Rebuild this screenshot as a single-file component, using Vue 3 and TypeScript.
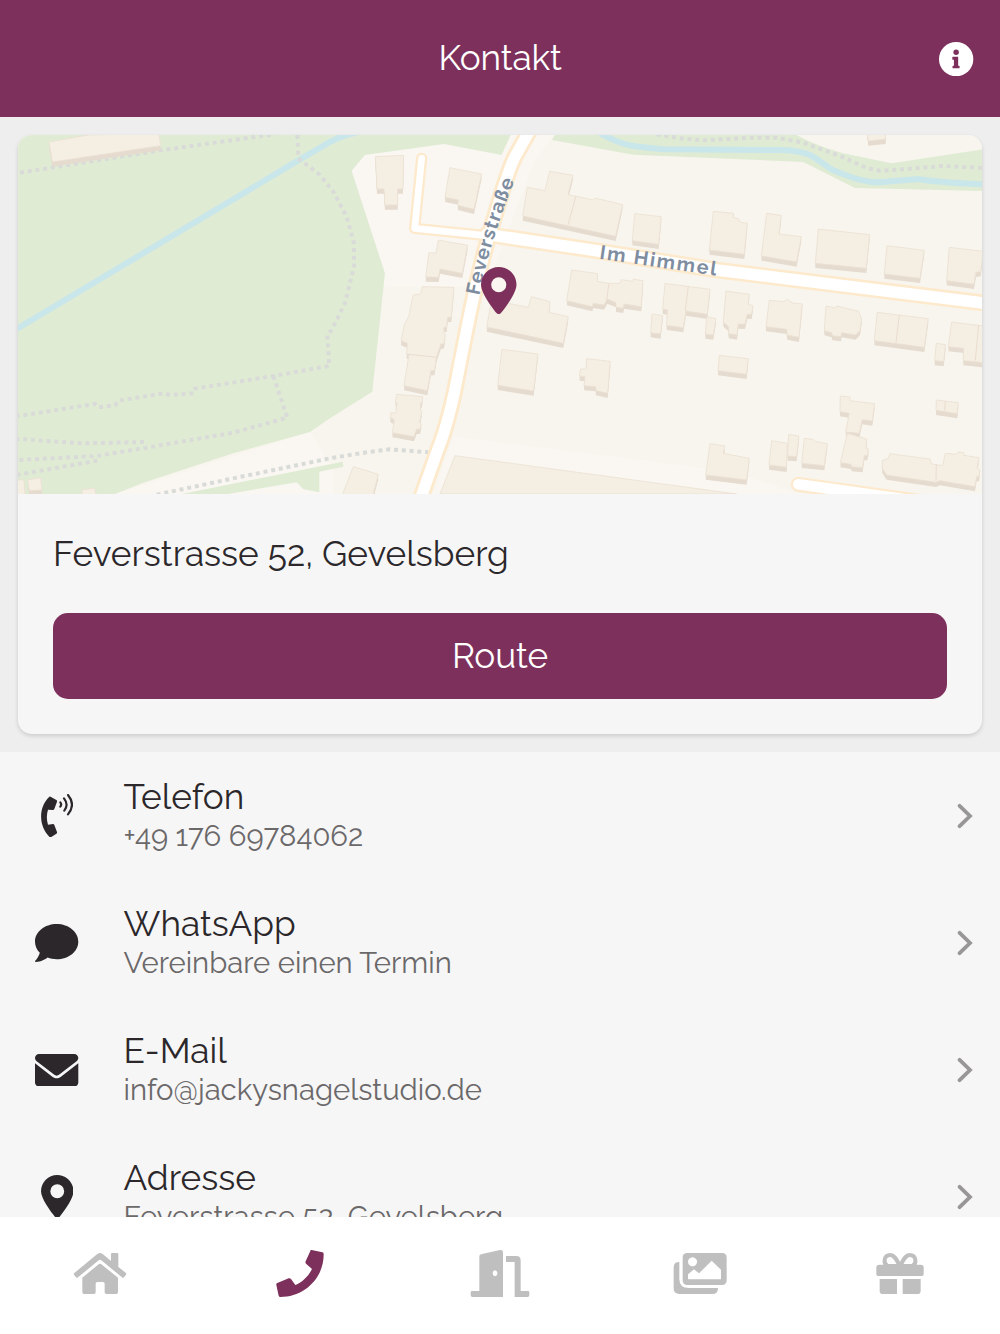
<script setup lang="ts">
import { ref } from 'vue'

interface ContactRow {
  id: string
  title: string
  text: string
}

interface Tile {
  x: number
  shapes: string[]
}

const rows: ContactRow[] = [
  { id: 'phone', title: 'Telefon', text: '+49 176 69784062' },
  { id: 'whatsapp', title: 'WhatsApp', text: 'Vereinbare einen Termin' },
  { id: 'mail', title: 'E-Mail', text: 'info@jackysnagelstudio.de' },
  { id: 'address', title: 'Adresse', text: 'Feverstrasse 52, Gevelsberg' }
]

const tabs = [
  { id: 'home', label: 'Start', viewBox: '210 90 180 141' },
  { id: 'contact', label: 'Kontakt', viewBox: '810 90 180 141' },
  { id: 'studio', label: 'Studio', viewBox: '1410 90 180 141' },
  { id: 'gallery', label: 'Galerie', viewBox: '510 90 180 141' },
  { id: 'gift', label: 'Gutschein', viewBox: '1110 90 180 141' }
]

const activeTab = ref('contact')

// Building outlines, grouped by map tile
const buildings: Tile[] = [
  {
    x: 0,
    shapes: [
      '147,66 265,45 476,40 482,77 157,126',
      '50,1080 72,1080 76,1130 50,1130',
      '83,1080 122,1073 126,1110 88,1112',
      '245,1110 283,1104 290,1130 250,1130'
    ]
  },
  {
    x: 990,
    shapes: [
      '136,110 221,106 219,207 203,207 203,255 165,255 162,207 141,207',
      '360,143 455,162 432,268 383,256 385,240 345,232',
      '325,360 413,376 397,460 330,447 326,472 287,471 297,398 318,399',
      '277,500 372,502 364,592 353,592 350,622 342,622 342,642 346,642 342,672 333,672 320,710 313,752 303,752 292,812 222,797 237,703 230,702 232,670 213,662 223,615 236,590 250,525 272,522',
      '200,823 278,830 276,848 272,850 271,870 276,873 269,908 274,912 270,928 260,928 252,950 187,938 193,900 181,892 183,877 197,880 201,850 196,845',
      '70,1040 145,1063 128,1130 35,1130',
      '592,202 645,212 659,154 729,166 714,224 790,240 795,234 878,254 857,349 578,288',
      '914,281 994,290 986,373 907,362',
      '725,450 803,461 802,484 835,490 870,490 874,479 909,484 910,478 939,482 934,560 882,552 880,565 858,562 858,548 832,537 822,555 790,550 787,560 710,542',
      '485,540 595,562 604,530 660,545 658,577 715,590 700,670 470,621',
      '516,688 624,702 611,813 503,796',
      '770,716 841,724 833,820 798,812 797,800 762,797 765,770 748,768 752,747 768,748',
      '966,582 998,587 992,642 962,638'
    ]
  },
  {
    x: 1980,
    shapes: [
      '15,490 150,508 142,583 78,573 70,623 20,616 22,570 8,568',
      '140,590 168,596 160,645 136,642',
      '198,513 268,523 265,553 279,557 275,583 262,583 255,613 235,612 231,645 206,641 206,620 190,606',
      '328,541 370,545 383,538 397,549 427,552 417,652 382,645 380,628 318,620',
      '498,558 526,564 530,558 596,574 605,597 600,632 587,645 545,638 543,650 517,647 515,638 493,632',
      '652,577 805,596 793,682 643,662',
      '875,606 970,618 970,728 910,722 911,685 865,680',
      '829,670 857,674 851,725 824,722',
      '178,706 265,716 260,763 174,752',
      '160,274 221,280 220,292 235,296 240,306 262,310 253,403 148,390',
      '320,280 364,286 357,342 424,350 410,426 304,408',
      '475,327 629,344 619,445 466,430',
      '681,377 793,391 780,475 673,462',
      '868,382 970,394 962,455 948,457 942,493 860,482',
      '622,40 677,40 677,58 625,63',
      '541,828 570,831 570,842 644,851 637,903 607,899 598,940 557,936 568,880 540,875',
      '562,940 620,957 618,985 626,988 622,1007 613,1007 608,1043 575,1040 573,1033 541,1028',
      '829,840 895,848 892,881 828,871',
      '150,971 195,978 190,1000 268,1015 260,1080 137,1065',
      '335,962 382,970 380,1042 327,1035',
      '386,943 417,948 410,1010 383,1008',
      '433,955 460,958 465,964 502,971 493,1037 425,1030',
      '690,1001 810,1017 815,1032 848,1037 856,1000 890,1003 895,996 912,998 912,1006 957,1013 952,1045 960,1050 957,1070 950,1070 945,1100 840,1082 828,1087 680,1065 667,1045 667,1022 685,1015'
    ]
  }
]

const footpaths = [
  '60,158 475,92 700,60 825,43',
  '892,45 895,115 960,165 1000,215 1040,290 1062,370 1062,440 1035,550 995,630 982,645 988,738 820,768 585,806 580,820 510,825 490,820 355,842 345,856 295,862 285,852 54,888',
  '820,768 862,893 700,938 440,983 290,1008 54,1020',
  '432,966 250,970 54,957',
  '292,1022 54,1064',
  '470,1124 700,1075 1000,1013 1100,997 1170,988 1285,997',
  '1970,43 2040,55 2110,61 2260,53 2330,53 2410,68 2530,112 2600,144 2640,152 2720,147 2830,138 2949,144'
]
</script>

<template>
  <div class="app">
    <header class="header">
      <h1 class="title">Kontakt</h1>
      <button class="info" aria-label="Info">
        <svg viewBox="0 0 34 34">
          <circle cx="17" cy="17" r="17" fill="#fff" />
          <circle cx="17" cy="10.1" r="2.7" fill="#7d305b" />
          <path d="M13.7 14.7h5.3v8.8h.9q.5 0 .5.5v1.6q0 .5-.5.5h-6q-.5 0-.5-.5V24q0-.5.5-.5h.9v-5.8h-1.1q-.5 0-.5-.5v-2q0-.5.5-.5z" fill="#7d305b" />
        </svg>
      </button>
    </header>

    <main class="content">
      <section class="card-area">
        <div class="card">
          <div class="map">
            <svg class="map-canvas" viewBox="54 45 2894 1077" preserveAspectRatio="none">
              <rect x="54" y="45" width="2895" height="1077" fill="#f8f5ee" />
              <path d="M1040 45H1660L1600 130L1460 500H1150L1050 152zM345 1122L930 936L1000 1050V1122zM1360 950L2200 1055L2400 1122H1300z" fill="#faf7f2" />

              <!-- Woods and river bank -->
              <path class="green" d="M54 45H1532L1505 105L1332 72L1095 105L1055 152L1155 460L1117 815L990 895L930 936L700 1000L430 1088L345 1122H54z" />
              <path class="green" d="M545 1122L1028 1025L1030 1040L958 1055V1117L910 1108L890 1087L685 1122z" />
              <path class="green" d="M1665 45H2390Q2450 78 2530 100L2675 130L2949 88V213L2565 204L2410 126L1900 104L1655 60z" />
              <path class="river" d="M50 627L900 118L990 66Q1030 45 1070 38" />
              <path class="river" d="M1800 40Q1860 72 1900 78T1990 88L2345 90Q2400 92 2430 105C2470 125 2480 145 2510 155S2580 187 2640 187L2755 177Q2800 186 2950 193" />

              <polyline v-for="path in footpaths" :key="path" class="footpath" :points="path" />

              <polygon points="1365,1007 2210,1122 1320,1122" class="roof" />

              <g v-for="tile in buildings" :key="tile.x" :transform="`translate(${tile.x} 0)`">
                <template v-for="shape in tile.shapes" :key="shape">
                  <polygon :points="shape" class="wall" transform="translate(0 14)" />
                  <polygon :points="shape" class="wall" transform="translate(0 7)" />
                  <polygon :points="shape" class="roof" />
                </template>
              </g>
              <path class="seam" d="M1728 228L1704 314M1827 490L1820 540M2065 500L2056 573M2698 585L2688 668M2936 615L2926 722M2836 843L2834 872M2809 1033L2808 1083M1227 703L1310 712" />

              <!-- Roads: casing first, surface on top -->
              <g class="casing">
                <path d="M1265 115L1244 325L1460 347" stroke-width="34" />
                <path d="M2395 1093L2780 1147" stroke-width="45" />
                <path d="M1460 343L1790 392L2150 450L2960 550" stroke-width="50" />
                <path d="M1590 30L1545 110Q1525 150 1490 270Q1440 430 1410 580L1380 730Q1350 900 1313 990L1262 1135" stroke-width="51" />
              </g>
              <g class="surface">
                <path d="M1265 115L1244 325L1460 347" stroke-width="20" />
                <path d="M2395 1093L2780 1147" stroke-width="32" />
                <path d="M1460 343L1790 392L2150 450L2960 550" stroke-width="35" />
                <path d="M1590 30L1545 110Q1525 150 1490 270Q1440 430 1410 580L1380 730Q1350 900 1313 990L1262 1135" stroke-width="34" />
              </g>

              <path id="label-fever" d="M1438 527Q1470 360 1556 150" fill="none" />
              <path id="label-himmel" d="M1797 416L2170 470" fill="none" />
              <text class="street"><textPath href="#label-fever" textLength="362">Feverstraße</textPath></text>
              <text class="street"><textPath href="#label-himmel" textLength="354">Im Himmel</textPath></text>
            </svg>
            <svg class="marker" viewBox="0 0 384 512">
              <path d="M215.7 499.2C267 435 384 279.4 384 192C384 86 298 0 192 0S0 86 0 192c0 87.4 117 243 168.3 307.2c12.3 15.3 35.1 15.3 47.4 0z" fill="#7d305b" />
              <circle cx="192" cy="192" r="82" fill="#fbf7f0" />
            </svg>
          </div>
          <div class="card-body">
            <p class="address">Feverstrasse 52, Gevelsberg</p>
            <button class="route">Route</button>
          </div>
        </div>
      </section>

      <ul class="list">
        <li v-for="row in rows" :key="row.id" class="row">
          <div class="row-icon">
            <svg v-if="row.id === 'phone'" width="32" height="43.3" viewBox="123 103 96 130">
              <path d="M148 111q3-1 5 1l16 9q3 2 2 5l-8 22q-1 3-4 3l-15-1q-7 22 0 45l15-2q3 0 4 3l8 21q1 3-2 5l-15 10q-3 2-6-1C114 197 116 141 148 111z" />
              <path d="M204 106Q228 135 204 164M192 116Q207 135 193 153M181 128Q186 135 181 141" fill="none" stroke="currentColor" stroke-width="6.5" stroke-linecap="round" />
            </svg>
            <svg v-else-if="row.id === 'whatsapp'" width="43.3" height="38" viewBox="0 32 512 448">
              <path d="M256 32C114.6 32 0 125.1 0 240c0 49.6 21.4 95 57 130.7c-12.5 50.4-54.3 95.3-54.8 95.8c-2.2 2.2-2.9 5.7-1.5 8.7S4.8 480 8 480c66.3 0 115.1-31.8 140.6-51.4C181.2 440.9 217.6 448 256 448c141.4 0 256-93.1 256-208S397.4 32 256 32z" />
            </svg>
            <svg v-else-if="row.id === 'mail'" width="43.3" height="32.5" viewBox="0 64 512 384">
              <path d="M256 352c-16.5 0-33.1-5.4-47.2-16.4L0 173.2V400c0 26.5 21.5 48 48 48h416c26.5 0 48-21.5 48-48V173.2L303.2 335.7C289.1 346.6 272.5 352 256 352zM16.3 145.3l212.2 165.1c16.2 12.6 38.9 12.6 55.1 0l212.2-165.1C505.1 137.3 512 125 512 112c0-26.5-21.5-48-48-48H48C21.5 64 0 85.5 0 112c0 13 6 25.3 16.3 33.3z" />
            </svg>
            <svg v-else width="32.5" height="43.3" viewBox="0 0 384 512">
              <path fill-rule="evenodd" d="M215.7 499.2C267 435 384 279.4 384 192C384 86 298 0 192 0S0 86 0 192c0 87.4 117 243 168.3 307.2c12.3 15.3 35.1 15.3 47.4 0zM192 110a82 82 0 1 1 0 164a82 82 0 1 1 0-164z" />
            </svg>
          </div>
          <div class="row-text">
            <span class="row-title">{{ row.title }}</span>
            <span class="row-sub">{{ row.text }}</span>
          </div>
          <svg class="chevron" viewBox="0 0 16 26">
            <path d="M2.6 2.8L13 13L2.6 23.2" />
          </svg>
        </li>
      </ul>
    </main>

    <nav class="tabs">
      <button
        v-for="tab in tabs"
        :key="tab.id"
        class="tab"
        :class="{ active: activeTab === tab.id }"
        :aria-label="tab.label"
        @click="activeTab = tab.id"
      >
        <svg :viewBox="tab.viewBox">
          <template v-if="tab.id === 'home'">
            <path d="M223 159L292 102Q300 96 308 102L333 123V102Q333 99 336 99H352Q355 99 355 102V141L377 158Q380 161 378 164L372 172Q369 175 366 172L304 121Q300 118 296 121L234 172Q231 175 228 172L222 164Q220 161 223 159z" />
            <path d="M297 132Q300 130 303 132L354 173V217Q354 222 349 222H319Q314 222 314 217V191Q314 186 309 186H292Q287 186 287 191V217Q287 222 282 222H252Q247 222 247 217V173z" />
          </template>
          <path v-else-if="tab.id === 'contact'" d="M935 90l32 7q4 1 4 5C972 175 912 231 841 231q-4 0-5-4l-7-32q-1-5 3-6l34-14q4-1 7 2l13 18C907 187 925 169 936 147l-17-15q-4-3-2-8l14-31q1-4 4-3z" />
          <template v-else-if="tab.id === 'studio'">
            <path fill-rule="evenodd" d="M1438 109Q1438 105 1443 103L1500 90Q1509 89 1509 97V231H1417Q1412 231 1412 226V217Q1412 213 1417 213H1438zM1485 151a7 9 0 1 0 .1 0z" />
            <path d="M1518 108H1549Q1562 108 1562 121V213H1583Q1588 213 1588 217V226Q1588 231 1583 231H1544V126H1518z" />
          </template>
          <template v-else-if="tab.id === 'gallery'">
            <path fill-rule="evenodd" d="M562 99H666Q680 99 680 113V181Q680 195 666 195H562Q548 195 548 181V113Q548 99 562 99zM577.500 112a13.500 13.500 0 1 0 .1 0zM564 178H663V149L635 122L597 160L582 148L564 163z" />
            <path d="M538 126V177Q538 204 567 204H654Q654 222 638 222H538Q521 222 521 205V142Q521 126 538 126z" />
          </template>
          <template v-else>
            <path d="M1138 134H1262Q1271 134 1271 142V163Q1271 168 1266 168H1134Q1129 168 1129 163V142Q1129 134 1138 134zM1139 177H1191V222H1149Q1139 222 1139 212zM1208 177H1262V212Q1262 222 1252 222H1208z" />
            <path d="M1200 138C1191 122 1184 105 1171 105C1151 105 1149 130 1162 138zM1200 138C1209 122 1216 105 1229 105C1249 105 1251 130 1238 138z" fill="none" stroke="currentColor" stroke-width="12" />
          </template>
        </svg>
      </button>
    </nav>
  </div>
</template>

<style>
body {
  margin: 0;
}
</style>

<style scoped>
.app {
  display: flex;
  flex-direction: column;
  width: 100%;
  height: 100vh;
  overflow: hidden;
  background: #f6f6f6;
  color: #2b272a;
  font-family: Raleway, Lato, sans-serif;
  font-weight: 400;
}

button {
  border: 0;
  padding: 0;
  background: none;
  font: inherit;
  cursor: pointer;
}

svg {
  display: block;
  fill: currentColor;
}

.header {
  display: grid;
  grid-template-columns: 1fr auto 1fr;
  align-items: center;
  flex: none;
  height: 117px;
  padding: 0 26.3px;
  box-sizing: border-box;
  background: #7d305b;
  color: #fff;
}

.title {
  grid-column: 2;
  margin: 0 0 2px;
  font-size: 35.2px;
  font-weight: 400;
  line-height: 44px;
  letter-spacing: -0.15px;
}

.info {
  justify-self: end;
  width: 34.3px;
  height: 34.3px;
  margin-top: 1px;
}

.content {
  flex: 1;
  min-height: 0;
  overflow: hidden;
}

.card-area {
  padding: 18px 17.7px;
  background: #eeeeee;
}

.card {
  overflow: hidden;
  border-radius: 14px;
  background: #f6f6f6;
  box-shadow: 0 2px 4px rgba(0, 0, 0, 0.14);
}

.map {
  position: relative;
  height: 359px;
}

.map-canvas {
  width: 100%;
  height: 100%;
}

.marker {
  position: absolute;
  left: 463.5px;
  top: 132.2px;
  width: 35.5px;
  height: 47.3px;
}

.green {
  fill: #e0ebd4;
}

.river {
  fill: none;
  stroke: #c9e6ea;
  stroke-width: 18;
}

.footpath {
  fill: none;
  stroke: #d9dbd8;
  stroke-width: 12;
  stroke-dasharray: 12 11.4;
}

.wall {
  fill: #e5dbcf;
}

.roof {
  fill: #f5eee2;
  stroke: #ebe1d3;
  stroke-width: 2.5;
}

.seam {
  fill: none;
  stroke: #eaddcf;
  stroke-width: 3;
}

.casing,
.surface {
  fill: none;
  stroke-linecap: round;
  stroke-linejoin: round;
}

.casing {
  stroke: #fde9cc;
}

.surface {
  stroke: #fff;
}

.street {
  fill: #7f8da0;
  font-size: 59px;
  font-weight: 700;
}

.card-body {
  padding: 35.3px;
}

.address {
  margin: 0 0 34px;
  font-size: 35.2px;
  line-height: 50px;
}

.route {
  display: block;
  width: 100%;
  height: 85.7px;
  padding-bottom: 1px;
  border-radius: 15px;
  background: #7d305b;
  color: #fff;
  font-size: 35.2px;
  letter-spacing: -0.1px;
}

.list {
  margin: 0;
  padding: 0;
  list-style: none;
}

.row {
  display: flex;
  align-items: center;
  height: 127px;
  padding: 0 27px 0 35.3px;
}

.row-icon {
  display: flex;
  justify-content: center;
  width: 43.3px;
  margin-right: 45px;
}

.row-text {
  display: flex;
  flex: 1;
  flex-direction: column;
  padding-bottom: 3px;
}

.row-title {
  font-size: 35.2px;
  line-height: 43px;
}

.row-sub {
  color: #6b686a;
  font-size: 29.3px;
  line-height: 36px;
}

.chevron {
  width: 16px;
  height: 26px;
  margin-top: 1px;
}

.chevron path {
  fill: none;
  stroke: #999698;
  stroke-width: 3.8;
  stroke-linecap: round;
}

.tabs {
  display: grid;
  grid-template-columns: repeat(5, 1fr);
  flex: none;
  height: 117px;
  padding-bottom: 4px;
  box-sizing: border-box;
  background: #fff;
}

.tab {
  display: flex;
  align-items: center;
  justify-content: center;
  color: #bfbfbf;
}

.tab.active {
  color: #7d305b;
}

.tab svg {
  width: 60px;
  height: 47px;
}
</style>
